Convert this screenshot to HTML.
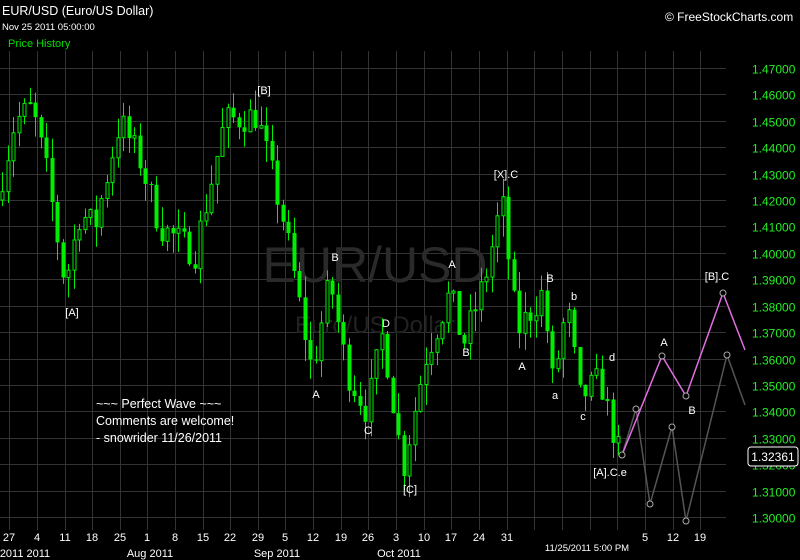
<!DOCTYPE html>
<html><head><meta charset="utf-8"><style>
html,body{margin:0;padding:0;background:#000;width:800px;height:560px;overflow:hidden}
svg{display:block}
text{font-family:"Liberation Sans",sans-serif}
</style></head><body>
<svg id="s" width="800" height="560" xmlns="http://www.w3.org/2000/svg">
<rect width="800" height="560" fill="#000"/>
<g id="grid" stroke="#333" stroke-width="1"></g>
<text x="375" y="282" font-size="50" fill="#2a2a2a" text-anchor="middle">EUR/USD</text>
<text x="375" y="333" font-size="24" fill="#222" text-anchor="middle">Euro/US Dollar</text>
<g id="candles"></g>
<g id="proj" fill="none"></g>
<text x="2" y="15" font-size="12.5" fill="#fff">EUR/USD (Euro/US Dollar)</text>
<text x="2" y="30" font-size="9.5" fill="#fff">Nov 25 2011 05:00:00</text>
<text x="8" y="47" font-size="11" fill="#00e000">Price History</text>
<text x="665" y="21" font-size="12" fill="#fff">© FreeStockCharts.com</text>
<g id="axis" font-size="12" fill="#22ee22"></g>
<rect x="748" y="447" width="50" height="19" rx="3" fill="#000" stroke="#fff" stroke-width="1"/>
<text x="773" y="461" font-size="12" fill="#fff" text-anchor="middle">1.32361</text>
<g font-size="11" fill="#fff" text-anchor="middle">
<text x="264" y="94">[B]</text>
<text x="72" y="316">[A]</text>
<text x="506" y="178">[X].C</text>
<text x="335" y="261">B</text>
<text x="316" y="398">A</text>
<text x="368" y="434">C</text>
<text x="386" y="327">D</text>
<text x="410" y="493">[C]</text>
<text x="452" y="268">A</text>
<text x="466" y="356">B</text>
<text x="550" y="282">B</text>
<text x="522" y="370">A</text>
<text x="574" y="300">b</text>
<text x="555" y="399">a</text>
<text x="583" y="420">c</text>
<text x="612" y="361">d</text>
<text x="610" y="476">[A].C.e</text>
<text x="664" y="346">A</text>
<text x="692" y="414">B</text>
<text x="717" y="280">[B].C</text>
</g>
<g font-size="12.5" fill="#fff">
<text x="96" y="408">~~~ Perfect Wave ~~~</text>
<text x="96" y="425">Comments are welcome!</text>
<text x="96" y="442">- snowrider  11/26/2011</text>
</g>
<g id="dates" font-size="11" fill="#fff" text-anchor="middle"></g>
<g font-size="11" fill="#fff" text-anchor="middle">
<text x="25" y="557">2011 2011</text>
<text x="150" y="557">Aug 2011</text>
<text x="277" y="557">Sep 2011</text>
<text x="399" y="557">Oct 2011</text>
<text x="587" y="551" font-size="9.5">11/25/2011 5:00 PM</text>
</g>
</svg>
<script>
(function(){
var NS="http://www.w3.org/2000/svg";
function el(p,t,a){var e=document.createElementNS(NS,t);for(var k in a)e.setAttribute(k,a[k]);document.getElementById(p).appendChild(e);return e;}
function Y(p){return 68+(1.47-p)*2641;}
var xs=[9,37,65,92,120,147,175,203,230,258,285,313,341,368,396,424,451,479,507,534,562,590,617,645,673,700];
xs.forEach(function(x){el("grid","line",{x1:x+.5,y1:51,x2:x+.5,y2:530});});
for(var i=0;i<=17;i++){var p=1.47-i*0.01;var y=Math.round(Y(p))+.5;el("grid","line",{x1:0,y1:y,x2:726,y2:y});
 var t=el("axis","text",{x:752,y:y+5});t.textContent=p.toFixed(5);}
var dl=["27","4","11","18","25","1","8","15","22","29","5","12","19","26","3","10","17","24","31"];
dl.forEach(function(d,i){var t=el("dates","text",{x:xs[i],y:541});t.textContent=d;});
[[645,"5"],[673,"12"],[700,"19"]].forEach(function(a){var t=el("dates","text",{x:a[0],y:541});t.textContent=a[1];});
var K=[[2,1.42],[20,1.45],[37,1.455],[52,1.43],[70,1.388],[85,1.415],[100,1.41],[125,1.45],[145,1.435],[165,1.41],[200,1.40],[230,1.45],[262,1.452],[290,1.41],[317,1.355],[335,1.39],[352,1.355],[372,1.34],[388,1.37],[408,1.318],[430,1.36],[455,1.385],[468,1.365],[490,1.39],[507,1.42],[522,1.37],[548,1.385],[558,1.35],[572,1.38],[585,1.345],[605,1.352],[623,1.325]];
function interp(x){for(var i=0;i<K.length-1;i++){if(x<=K[i+1][0]){var a=K[i],b=K[i+1];return a[1]+(b[1]-a[1])*(x-a[0])/(b[0]-a[0]);}}return K[K.length-1][1];}
var seed=7;function r(){seed=(seed*16807)%2147483647;return seed/2147483647;}
var prev=interp(2);
for(var x=2;x<=623;x+=5.5){var c=interp(x+5.5)+(r()-.5)*0.012;var o=prev;var hi=Math.max(o,c)+r()*0.008;var lo=Math.min(o,c)-r()*0.008;
 var cx=Math.round(x)+.5;el("candles","line",{x1:cx,y1:Y(hi),x2:cx,y2:Y(lo),stroke:"#00ee00","stroke-width":1});
 var bt=Y(Math.max(o,c)),h=Math.max(1,Math.abs(Y(o)-Y(c)));
 if(c<o)el("candles","rect",{x:cx-2,y:bt,width:4,height:h,fill:"#00ee00"});
 else el("candles","rect",{x:cx-1.5,y:bt,width:3,height:h,fill:"#000",stroke:"#00ee00","stroke-width":1});
 prev=c;}
el("proj","polyline",{points:"622,455 636,409 650,504 672,427 686,521 727,355 745,405",stroke:"#555","stroke-width":1.5});
el("proj","polyline",{points:"622,455 662,356 686,396 723,293 745,350",stroke:"#e070e0","stroke-width":1.5});
[[622,455],[636,409],[650,504],[672,427],[686,521],[727,355],[662,356],[686,396],[723,293]].forEach(function(p){el("proj","circle",{cx:p[0],cy:p[1],r:3,stroke:"#aaa","stroke-width":1,fill:"#000"});});
})();
</script>
</body></html>
